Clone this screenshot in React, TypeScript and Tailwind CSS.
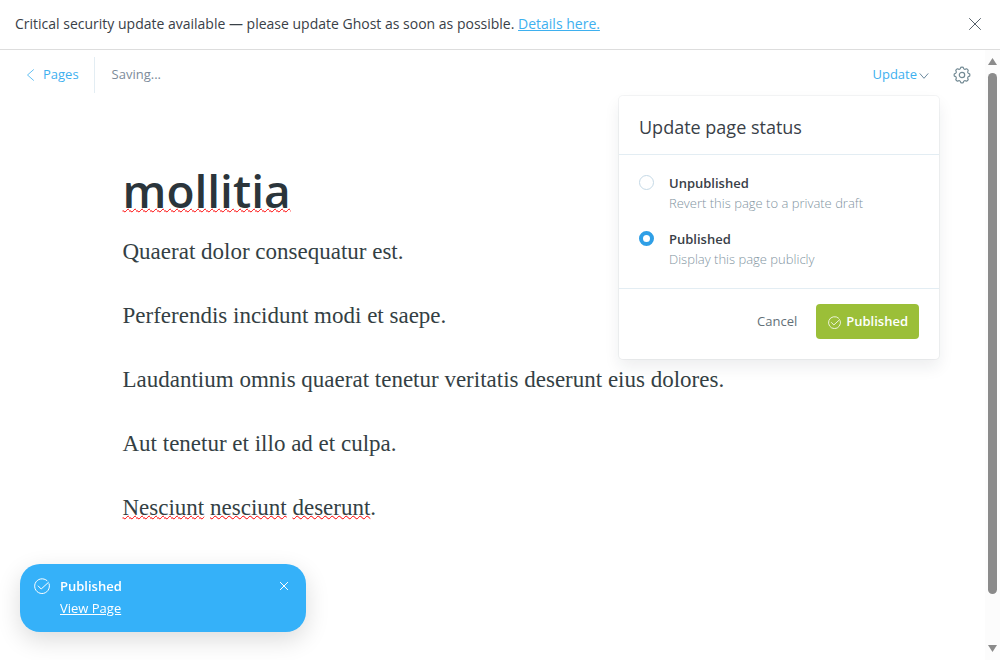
import { useState } from "react";

const paragraphs = [
  "Quaerat dolor consequatur est.",
  "Perferendis incidunt modi et saepe.",
  "Laudantium omnis quaerat tenetur veritatis deserunt eius dolores.",
  "Aut tenetur et illo ad et culpa.",
];

const misspelt = "underline decoration-wavy decoration-[#f00] decoration-1 underline-offset-0 [text-decoration-skip-ink:none]";

function CheckCircle({ className }: { className: string }) {
  return (
    <svg viewBox="0 0 16 16" fill="none" stroke="currentColor" strokeLinecap="round" strokeLinejoin="round" className={className} aria-hidden="true">
      <path d="M15.1 5.8A7.4 7.4 0 1 1 13 2.6" />
      <path d="M4.2 8l3 3 7.2-6.6" />
    </svg>
  );
}

function Cross({ className }: { className: string }) {
  return (
    <svg viewBox="0 0 12 12" fill="none" stroke="currentColor" strokeLinecap="round" className={className} aria-hidden="true">
      <path d="M.5.5l11 11M11.5.5l-11 11" />
    </svg>
  );
}

function Gear() {
  const points: string[] = [];
  const teeth = 8;
  for (let i = 0; i < teeth; i++) {
    const at = (r: number, offset: number) => {
      const a = ((i + offset) / teeth) * Math.PI * 2 - Math.PI / 2;
      return `${(9 + r * Math.cos(a)).toFixed(2)} ${(9 + r * Math.sin(a)).toFixed(2)}`;
    };
    points.push(`${i ? "L" : "M"}${at(7.7, -0.2)} Q${at(8.2, 0)} ${at(7.7, 0.2)} Q${at(5, 0.5)} ${at(7.7, 0.8)}`);
  }
  return (
    <svg viewBox="0 0 18 18" fill="none" stroke="currentColor" strokeWidth="1.2" strokeLinejoin="round" className="size-[18px]" aria-hidden="true">
      <path d={points.join(" ") + "Z"} />
      <circle cx="9" cy="9" r="2.7" />
    </svg>
  );
}

function Banner() {
  return (
    <header className="flex h-[50px] shrink-0 items-center justify-between border-b border-[#dddddd] pr-[19px] pb-px pl-[15px] text-sm text-[#394047]">
      <p>
        Critical security update available — please update Ghost as soon as possible.{" "}
        <a href="#details" className="text-[#3eb0ef] underline">Details here.</a>
      </p>
      <button type="button" aria-label="Dismiss"><Cross className="size-3 text-[#55606a]" /></button>
    </header>
  );
}

function StatusMenu() {
  const [status, setStatus] = useState("published");
  const options = [
    { id: "unpublished", label: "Unpublished", hint: "Revert this page to a private draft" },
    { id: "published", label: "Published", hint: "Display this page publicly" },
  ];
  return (
    <section className="absolute top-[46px] right-[46px] w-80 rounded bg-white text-[13px] shadow-[0_0_0_1px_rgba(99,114,130,0.07),0_8px_16px_rgba(27,39,51,0.08)]">
      <h2 className="flex h-[59px] items-center border-b border-[#e3edf3] px-5 pt-1 text-lg text-[#394047]">Update page status</h2>
      <div className="flex h-[134px] flex-col gap-4 border-b border-[#e3edf3] px-5 pt-[18px]">
        {options.map((o) => (
          <div key={o.id} className="flex gap-[15px]">
            <input
              type="radio"
              id={o.id}
              name="status"
              checked={status === o.id}
              onChange={() => setStatus(o.id)}
              aria-describedby={`${o.id}-hint`}
              className="mt-[2px] size-[15px] shrink-0 appearance-none rounded-full border border-[#c5d9e6] bg-white checked:border-4 checked:border-[#2f9fe6]"
            />
            <div className="leading-5">
              <label htmlFor={o.id} className="block font-semibold text-[#394047]">{o.label}</label>
              <p id={`${o.id}-hint`} className="font-light text-[#82949f]">{o.hint}</p>
            </div>
          </div>
        ))}
      </div>
      <footer className="flex items-center justify-end gap-[19px] px-5 pt-[15px] pb-5">
        <button type="button" className="pt-px text-[#637078]">Cancel</button>
        <button type="button" className="flex h-[35px] items-center gap-[5px] rounded bg-[#9bbf38] px-3 pt-px pr-[11px] font-semibold text-white">
          <CheckCircle className="size-[13px]" />
          Published
        </button>
      </footer>
    </section>
  );
}

function Toast() {
  return (
    <aside className="fixed bottom-7 left-5 flex h-[68px] w-[286px] items-start rounded-[20px] bg-[#35b1f9] px-[14px] pt-[11px] text-[13px] text-white shadow-[0_8px_24px_rgba(0,0,0,0.14)]">
      <CheckCircle className="mt-[3px] size-4 shrink-0" />
      <div className="ml-[10px] flex-1 leading-[22px]">
        <p className="font-semibold">Published</p>
        <a href="#view" className="underline">View Page</a>
      </div>
      <button type="button" aria-label="Close notification" className="mt-[7px] mr-1"><Cross className="size-2 stroke-[1.5]" /></button>
    </aside>
  );
}

function Scrollbar() {
  return (
    <div className="flex w-[15px] shrink-0 flex-col items-center bg-[#fcfcfc] py-2 text-[#8b8b8b]" aria-hidden="true">
      <svg viewBox="0 0 9 7" className="h-[7px] w-[9px]"><path d="M4.5 0L9 7H0z" fill="currentColor" /></svg>
      <div className="mt-2 mb-[51px] w-[9px] flex-1 rounded-full bg-[#8b8b8b]" />
      <svg viewBox="0 0 9 7" className="h-[7px] w-[9px]"><path d="M0 0h9L4.5 7z" fill="currentColor" /></svg>
    </div>
  );
}

export default function App() {
  return (
    <div className="flex h-screen flex-col bg-white font-['Open_Sans','Noto_Sans',sans-serif]">
      <Banner />
      <div className="flex min-h-0 flex-1">
        <main className="relative min-w-0 flex-1">
          <nav className="flex h-[50px] items-center justify-between pr-[14px] pl-[26px] text-[13px]">
            <div className="flex items-center">
              <a href="#pages" className="flex h-9 items-center gap-2 border-r border-[#e3edf3] pr-[15px] text-[#3eb0ef]">
                <svg viewBox="0 0 9 12" fill="none" stroke="currentColor" strokeWidth="0.8" strokeLinecap="round" strokeLinejoin="round" className="h-3 w-[9px]" aria-hidden="true"><path d="M7.5.7L1.5 6l6 5.3" /></svg>
                Pages
              </a>
              <span className="ml-[17px] text-[#7c8b9a]">Saving...</span>
            </div>
            <div className="flex items-center gap-6">
              <button type="button" aria-expanded="true" className="flex items-center gap-[2px] text-[#3eb0ef]">
                Update
                <svg viewBox="0 0 10 6" fill="none" stroke="currentColor" strokeLinecap="round" strokeLinejoin="round" className="mt-[2px] h-[6px] w-[10px] text-[#6b8a9f]" aria-hidden="true"><path d="M1 .7l4 4.6L9 .7" /></svg>
              </button>
              <button type="button" aria-label="Settings" className="text-[#738a94]"><Gear /></button>
            </div>
          </nav>
          <article className="mx-auto max-w-[740px] pt-[54px]">
            <h1 className="text-[46px] leading-[72px] font-semibold text-[#2b353b]"><span className={misspelt}>mollitia</span></h1>
            <div className="mt-[10px] flex flex-col gap-8 font-['Liberation_Serif',serif] text-[23px] leading-8 text-[#343f44]">
              {paragraphs.map((p) => <p key={p}>{p}</p>)}
              <p>
                <span className={misspelt}>Nesciunt</span> <span className={misspelt}>nesciunt</span> <span className={misspelt}>deserunt</span>.
              </p>
            </div>
          </article>
          <StatusMenu />
        </main>
        <Scrollbar />
      </div>
      <Toast />
    </div>
  );
}
